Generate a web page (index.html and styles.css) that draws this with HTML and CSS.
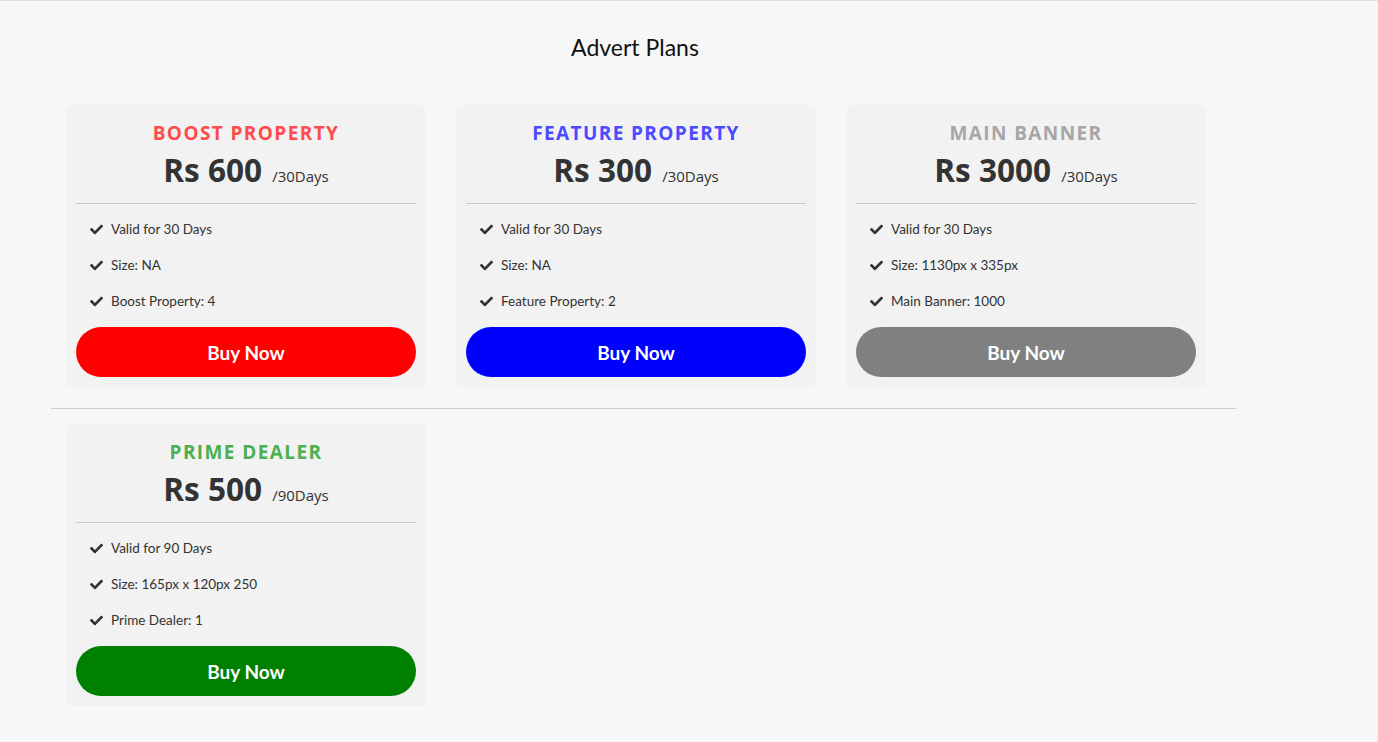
FILE: index.html
```html
<!DOCTYPE html>
<html lang="en">
<head>
    <meta charset="UTF-8">
    <meta name="viewport" content="width=device-width, initial-scale=1.0">
    <title>Advert Plans</title>
    <link rel="stylesheet" href="styles.css">
</head>
<body>
    <div class="page">
        <h2 class="page-title">Advert Plans</h2>

        <div class="plan-row">
            <div class="plan-card">
                <h3 class="plan-name boost">BOOST PROPERTY</h3>
                <div class="plan-price">Rs 600 <span class="plan-period">/30Days</span></div>
                <ul class="plan-features">
                    <li><svg class="tick" viewBox="0 0 512 512"><path d="M173.9 439.4l-166.4-166.4c-10-10-10-26.2 0-36.2l36.2-36.2c10-10 26.2-10 36.2 0L192 312.7 432.1 72.6c10-10 26.2-10 36.2 0l36.2 36.2c10 10 10 26.2 0 36.2l-294.4 294.4c-10 10-26.2 10-36.2 0z"/></svg>Valid for 30 Days</li>
                    <li><svg class="tick" viewBox="0 0 512 512"><path d="M173.9 439.4l-166.4-166.4c-10-10-10-26.2 0-36.2l36.2-36.2c10-10 26.2-10 36.2 0L192 312.7 432.1 72.6c10-10 26.2-10 36.2 0l36.2 36.2c10 10 10 26.2 0 36.2l-294.4 294.4c-10 10-26.2 10-36.2 0z"/></svg>Size: NA</li>
                    <li><svg class="tick" viewBox="0 0 512 512"><path d="M173.9 439.4l-166.4-166.4c-10-10-10-26.2 0-36.2l36.2-36.2c10-10 26.2-10 36.2 0L192 312.7 432.1 72.6c10-10 26.2-10 36.2 0l36.2 36.2c10 10 10 26.2 0 36.2l-294.4 294.4c-10 10-26.2 10-36.2 0z"/></svg>Boost Property: 4</li>
                </ul>
                <button class="buy-btn btn-red">Buy Now</button>
            </div>

            <div class="plan-card">
                <h3 class="plan-name feature">FEATURE PROPERTY</h3>
                <div class="plan-price">Rs 300 <span class="plan-period">/30Days</span></div>
                <ul class="plan-features">
                    <li><svg class="tick" viewBox="0 0 512 512"><path d="M173.9 439.4l-166.4-166.4c-10-10-10-26.2 0-36.2l36.2-36.2c10-10 26.2-10 36.2 0L192 312.7 432.1 72.6c10-10 26.2-10 36.2 0l36.2 36.2c10 10 10 26.2 0 36.2l-294.4 294.4c-10 10-26.2 10-36.2 0z"/></svg>Valid for 30 Days</li>
                    <li><svg class="tick" viewBox="0 0 512 512"><path d="M173.9 439.4l-166.4-166.4c-10-10-10-26.2 0-36.2l36.2-36.2c10-10 26.2-10 36.2 0L192 312.7 432.1 72.6c10-10 26.2-10 36.2 0l36.2 36.2c10 10 10 26.2 0 36.2l-294.4 294.4c-10 10-26.2 10-36.2 0z"/></svg>Size: NA</li>
                    <li><svg class="tick" viewBox="0 0 512 512"><path d="M173.9 439.4l-166.4-166.4c-10-10-10-26.2 0-36.2l36.2-36.2c10-10 26.2-10 36.2 0L192 312.7 432.1 72.6c10-10 26.2-10 36.2 0l36.2 36.2c10 10 10 26.2 0 36.2l-294.4 294.4c-10 10-26.2 10-36.2 0z"/></svg>Feature Property: 2</li>
                </ul>
                <button class="buy-btn btn-blue">Buy Now</button>
            </div>

            <div class="plan-card">
                <h3 class="plan-name banner">MAIN BANNER</h3>
                <div class="plan-price">Rs 3000 <span class="plan-period">/30Days</span></div>
                <ul class="plan-features">
                    <li><svg class="tick" viewBox="0 0 512 512"><path d="M173.9 439.4l-166.4-166.4c-10-10-10-26.2 0-36.2l36.2-36.2c10-10 26.2-10 36.2 0L192 312.7 432.1 72.6c10-10 26.2-10 36.2 0l36.2 36.2c10 10 10 26.2 0 36.2l-294.4 294.4c-10 10-26.2 10-36.2 0z"/></svg>Valid for 30 Days</li>
                    <li><svg class="tick" viewBox="0 0 512 512"><path d="M173.9 439.4l-166.4-166.4c-10-10-10-26.2 0-36.2l36.2-36.2c10-10 26.2-10 36.2 0L192 312.7 432.1 72.6c10-10 26.2-10 36.2 0l36.2 36.2c10 10 10 26.2 0 36.2l-294.4 294.4c-10 10-26.2 10-36.2 0z"/></svg>Size: 1130px x 335px</li>
                    <li><svg class="tick" viewBox="0 0 512 512"><path d="M173.9 439.4l-166.4-166.4c-10-10-10-26.2 0-36.2l36.2-36.2c10-10 26.2-10 36.2 0L192 312.7 432.1 72.6c10-10 26.2-10 36.2 0l36.2 36.2c10 10 10 26.2 0 36.2l-294.4 294.4c-10 10-26.2 10-36.2 0z"/></svg>Main Banner: 1000</li>
                </ul>
                <button class="buy-btn btn-grey">Buy Now</button>
            </div>
        </div>

        <hr class="row-divider">

        <div class="plan-row">
            <div class="plan-card">
                <h3 class="plan-name prime">PRIME DEALER</h3>
                <div class="plan-price">Rs 500 <span class="plan-period">/90Days</span></div>
                <ul class="plan-features">
                    <li><svg class="tick" viewBox="0 0 512 512"><path d="M173.9 439.4l-166.4-166.4c-10-10-10-26.2 0-36.2l36.2-36.2c10-10 26.2-10 36.2 0L192 312.7 432.1 72.6c10-10 26.2-10 36.2 0l36.2 36.2c10 10 10 26.2 0 36.2l-294.4 294.4c-10 10-26.2 10-36.2 0z"/></svg>Valid for 90 Days</li>
                    <li><svg class="tick" viewBox="0 0 512 512"><path d="M173.9 439.4l-166.4-166.4c-10-10-10-26.2 0-36.2l36.2-36.2c10-10 26.2-10 36.2 0L192 312.7 432.1 72.6c10-10 26.2-10 36.2 0l36.2 36.2c10 10 10 26.2 0 36.2l-294.4 294.4c-10 10-26.2 10-36.2 0z"/></svg>Size: 165px x 120px 250</li>
                    <li><svg class="tick" viewBox="0 0 512 512"><path d="M173.9 439.4l-166.4-166.4c-10-10-10-26.2 0-36.2l36.2-36.2c10-10 26.2-10 36.2 0L192 312.7 432.1 72.6c10-10 26.2-10 36.2 0l36.2 36.2c10 10 10 26.2 0 36.2l-294.4 294.4c-10 10-26.2 10-36.2 0z"/></svg>Prime Dealer: 1</li>
                </ul>
                <button class="buy-btn btn-green">Buy Now</button>
            </div>
        </div>
    </div>
</body>
</html>
```

FILE: styles.css
```css
body, html {
    margin: 0;
    background-color: #f7f7f7;
    font-family: Lato, "Open Sans", sans-serif;
    color: #333;
}
body {
    border-top: 1px solid #e0e0e0;
}
.page {
    width: 1185px;
    margin-left: 51px;
    padding-bottom: 35px;
}
.page-title {
    margin: 0;
    padding-top: 32px;
    padding-right: 17px;
    height: 104px;
    box-sizing: border-box;
    text-align: center;
    font-size: 23px;
    font-weight: 400;
    color: #111;
    line-height: 28px;
}
.plan-row {
    display: flex;
    gap: 30px;
    padding: 0 15px;
}
.plan-card {
    width: 360px;
    box-sizing: border-box;
    padding: 10px;
    background-color: #f2f2f2;
    border-radius: 6px;
}
.plan-name {
    margin: 0;
    padding-top: 6px;
    text-align: center;
    font-family: "Open Sans", sans-serif;
    font-size: 19px;
    font-weight: 700;
    letter-spacing: 1.4px;
    line-height: 24px;
}
.boost { color: #ff4b4b; }
.feature { color: #4a4aff; }
.banner { color: #a6a6a6; }
.prime { color: #4caf50; }
.plan-price {
    text-align: center;
    font-family: "Open Sans", sans-serif;
    font-size: 31.5px;
    font-weight: 700;
    color: #333;
    line-height: 40px;
    padding-top: 5px;
    padding-bottom: 7px;
    border-bottom: 1px solid #c8c8c8;
}
.plan-period {
    font-size: 15px;
    font-weight: 400;
    margin-left: 2px;
}
.plan-features {
    list-style: none;
    margin: 0;
    padding: 7px 0 8px 14px;
}
.plan-features li {
    display: flex;
    align-items: center;
    height: 36px;
    font-size: 13.5px;
    color: #333;
}
.tick {
    width: 13px;
    height: 13px;
    fill: #333;
    margin-right: 8px;
}
.buy-btn {
    display: block;
    width: 100%;
    height: 50px;
    border: none;
    border-radius: 25px;
    color: white;
    font-family: Lato, sans-serif;
    font-size: 19px;
    font-weight: 700;
    cursor: pointer;
}
.btn-red { background-color: #ff0000; }
.btn-blue { background-color: #0000ff; }
.btn-grey { background-color: #808080; }
.btn-green { background-color: #008000; }
.row-divider {
    margin: 21px 0 15px;
    border: none;
    border-top: 1px solid #cfcfcf;
}
```
